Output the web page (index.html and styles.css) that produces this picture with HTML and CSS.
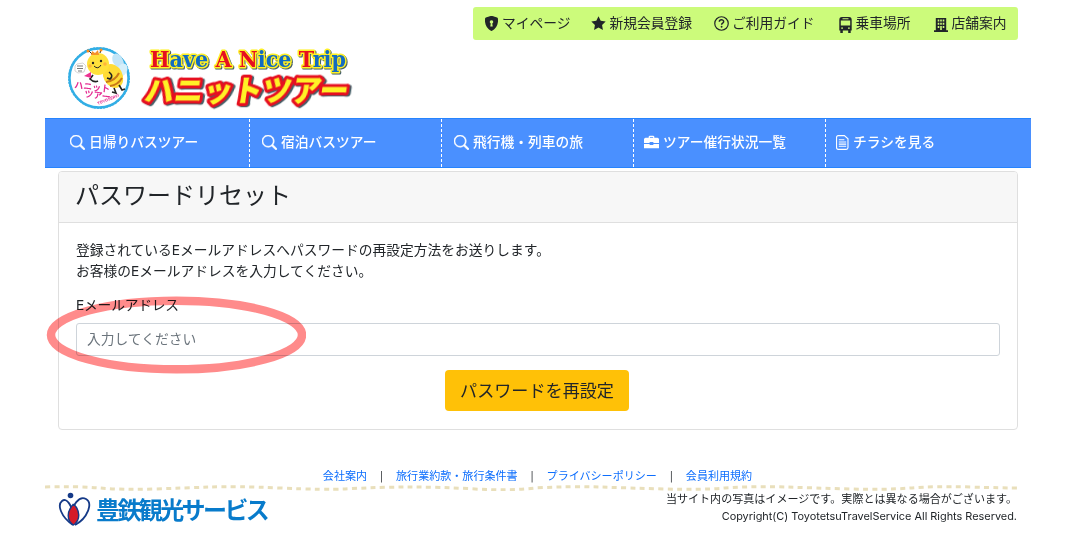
FILE: index.html
```html
<!DOCTYPE html>
<html lang="ja">
<head>
  <meta charset="UTF-8">
  <meta name="viewport" content="width=device-width, initial-scale=1.0">
  <title>パスワードリセット</title>
  <link rel="stylesheet" href="styles.css">
</head>
<body>
  <svg width="0" height="0" class="defs">
    <symbol id="search" viewBox="0 0 16 16">
      <path d="M11.742 10.344a6.5 6.5 0 1 0-1.397 1.398l3.85 3.85a1 1 0 0 0 1.415-1.414zM12 6.5a5.5 5.5 0 1 1-11 0 5.5 5.5 0 0 1 11 0" stroke="currentColor" stroke-width=".6"/>
    </symbol>
  </svg>
  <div class="container">
    <header class="header">
      <ul class="user-menu">
        <li><a href="#"><svg class="icon" viewBox="0 0 16 16"><path fill-rule="evenodd" d="M8 0c-.7 0-2.600.5-5.200 1.300C1.800 1.600 1.200 2.200 1.100 3 .6 7.200 2 11.500 4.800 13.900 6 15 7.300 16 8 16s2-1 3.200-2.100C14 11.500 15.400 7.200 14.900 3c-.1-.8-.7-1.400-1.700-1.700C10.600.5 8.700 0 8 0m0 4.500a1.900 1.900 0 0 1 .8 3.600l.5 3H6.700l.5-3A1.900 1.900 0 0 1 8 4.500"/></svg>マイページ</a></li>
        <li><a href="#"><svg class="icon" viewBox="0 0 16 16"><path d="M8 .3l2.350 4.800 5.300.77-3.850 3.730.93 5.300L8 12.350 3.270 14.900l.93-5.300L.35 5.870l5.300-.77z"/></svg>新規会員登録</a></li>
        <li class="guide"><a href="#"><svg class="icon" viewBox="0 0 16 16"><circle cx="8" cy="8" r="7.200" fill="none" stroke="currentColor" stroke-width="1.300"/><path d="M5.700 6.200C5.700 3.300 10.300 3.400 10.300 6c0 1.600-2.200 1.600-2.200 3.200" fill="none" stroke="currentColor" stroke-width="1.600"/><circle cx="8.100" cy="11.500" r="1"/></svg>ご利用ガイド</a></li>
        <li><a href="#"><svg class="icon bus" viewBox="0 0 13 16"><path fill-rule="evenodd" d="M3 0h7c2 0 2.700 1 2.700 3v10.500h-1V16H9.200v-2.500H3.800V16H1.300v-2.500h-1V3C.3 1 1 0 3 0M3.500 1.300v1h6v-1zM1.800 3.500V8.500h9.400V3.500zM2.200 10.500v1.300H4v-1.300zm6.800 0v1.300h1.800v-1.300z"/></svg>乗車場所</a></li>
        <li><a href="#"><svg class="icon building" viewBox="0 0 14 14"><path fill-rule="evenodd" d="M1.800 0h10.400v12.300H14V14H0v-1.700h1.800zM3.700 1.500v2h1.600v-2zm2.500 0v2h1.600v-2zm2.500 0v2h1.600v-2zM3.700 4.800v2h1.600v-2zm2.500 0v2h1.600v-2zm2.500 0v2h1.600v-2zM3.700 8v2h1.600V8zm2.500 0v4h1.600V8zm2.500 0v2h1.600V8z"/></svg>店舗案内</a></li>
      </ul>
      <a href="#" class="brand">
        <svg class="brand-mark" viewBox="0 0 64 64">
          <circle cx="32" cy="32" r="29.500" fill="#fff" stroke="#32aee5" stroke-width="2.400"/>
          <circle cx="32" cy="32" r="30.500" fill="none" stroke="#32aee5" stroke-width="1" stroke-dasharray="2 1.200"/>
          <ellipse cx="51" cy="15" rx="5" ry="8" fill="#c3e5f7" transform="rotate(-28 51 15)"/>
          <ellipse cx="55" cy="24" rx="5" ry="7" fill="#d5effa" transform="rotate(30 55 24)"/>
          <ellipse cx="46" cy="30" rx="9.500" ry="12.500" fill="#ffdc35" transform="rotate(-28 46 30)"/>
          <path d="M39 36q9-1 13-9M43 40q8-1 12-8" fill="none" stroke="#c97818" stroke-width="2"/>
          <circle cx="31" cy="18" r="11" fill="#ffe13b"/>
          <path d="M25 8L21 4M33 7l1-4" fill="none" stroke="#222" stroke-width="1"/>
          <circle cx="21" cy="5" r="1.500" fill="#ff8a18"/><circle cx="34" cy="4" r="1.500" fill="#ff8a18"/>
          <path d="M24 9l1-4 3 2 3-3 1 5z" fill="#f7922b"/>
          <circle cx="26" cy="17" r="1.200" fill="#222"/><circle cx="34" cy="15" r="1.200" fill="#222"/>
          <path d="M27 20q4 4 7-1" fill="none" stroke="#222" stroke-width="1"/>
          <circle cx="23" cy="20" r="1.800" fill="#ffb43b"/><circle cx="38" cy="18" r="1.800" fill="#ffb43b"/>
          <path d="M42 26q5 4 1 7l-3-1M26 29l-3 4q4 4 8 2M47 42l2 5-4-1M52 39l3 5 3-1" fill="none" stroke="#222" stroke-width="1.600"/>
          <path d="M17 30l7-4v6z" fill="#ed3292"/>
          <path d="M8 20l2-2 6-1 3 3-2 6-6 1-3-2z" fill="#fff" stroke="#aaa" stroke-width=".5"/>
          <path d="M10 20h6M10 22.500h6M11 25h4" stroke="#555" stroke-width=".8"/>
          <text x="7" y="42" class="mark-text" transform="rotate(7 7 42)">ハニット</text>
          <text x="17" y="51" class="mark-text" transform="rotate(7 17 51)">ツアー</text>
          <text x="31" y="59" class="mark-town" transform="rotate(-22 31 59)">TOYOSERVI</text>
        </svg>
        <svg class="brand-name" viewBox="0 0 216 66">
          <text x="10" y="21" textLength="196" lengthAdjust="spacingAndGlyphs" class="latin"><tspan class="red">H</tspan>ave <tspan class="red">A N</tspan>ice <tspan class="red">T</tspan>rip</text>
          <text x="12" y="55.500" textLength="204" lengthAdjust="spacingAndGlyphs" class="kana" transform="skewX(-9)">ハニットツアー</text>
        </svg>
      </a>
    </header>

    <nav class="nav">
      <a href="#"><svg class="icon"><use href="#search"/></svg>日帰りバスツアー</a>
      <a href="#"><svg class="icon"><use href="#search"/></svg>宿泊バスツアー</a>
      <a href="#"><svg class="icon"><use href="#search"/></svg>飛行機・列車の旅</a>
      <a href="#" class="status"><svg class="icon" viewBox="0 0 16 16"><path fill-rule="evenodd" d="M5 3V1.500L6 .8h4l1 .7V3h3.500l1.500 1v4.500h-6V7.500H6v1H0V4l1.500-1zM6.300 3h3.400V2H6.300zM0 9.500h6v1.200h4V9.500h6V14H0z"/></svg>ツアー催行状況一覧</a>
      <a href="#"><svg class="icon file" viewBox="0 0 14 16"><path d="M2.500.6h6.500L12.900 4v9.500c0 1.300-.6 1.900-1.900 1.900H2.500C1.200 15.400.6 14.800.6 13.500v-11C.6 1.200 1.200.6 2.500.6zM3 5h6M3 7.500h8M3 9.700h8M3 12h8" fill="none" stroke="currentColor" stroke-width="1.200"/></svg>チラシを見る</a>
    </nav>

    <main class="card">
      <h1 class="card-header">パスワードリセット</h1>
      <form class="card-body" action="#" method="POST">
        <p>登録されているEメールアドレスへパスワードの再設定方法をお送りします。<br>お客様のEメールアドレスを入力してください。</p>
        <div class="form-group">
          <label for="email">Eメールアドレス</label>
          <input type="email" id="email" name="email" placeholder="入力してください">
          <!-- highlight around the email field -->
          <svg class="highlight" viewBox="0 0 260 78"><ellipse cx="130.500" cy="39" rx="125.500" ry="34.300"/></svg>
        </div>
        <button type="submit">パスワードを再設定</button>
      </form>
    </main>

    <footer class="footer">
      <div class="footer-links">
        <a href="#">会社案内</a><span>|</span><a href="#">旅行業約款・旅行条件書</a><span>|</span><a href="#">プライバシーポリシー</a><span>|</span><a href="#">会員利用規約</a>
      </div>
      <svg class="divider" viewBox="0 0 986 6"><path d="M0 2Q30 1 55 3T108 4Q140 3 165 2T235 3T300 4Q335 2 365 2T430 4T490 3Q525 1 555 2T620 4T680 3Q710 1 740 2T805 4T865 3Q890 1 925 2T974 3"/></svg>
      <div class="footer-bottom">
        <a href="#" class="company">
          <svg class="company-mark" viewBox="0 0 38 38">
            <path d="M15 34C3 26-1 14 4 10C9 6 14 15 16 26M17 34C30 27 35 12 28 8C21 4 14 15 13 24" fill="none" stroke="#153a88" stroke-width="1.800"/>
            <path d="M15.500 13C9 20 8 29 15.500 34C23 29 22 19 15.500 13" fill="#d51b29" stroke="#153a88" stroke-width="1.400"/>
            <circle cx="12.500" cy="4.500" r="2.800" fill="#153a88"/>
          </svg>
          <span>豊鉄観光サービス</span>
        </a>
        <div class="notes">
          <p>当サイト内の写真はイメージです。実際とは異なる場合がございます。</p>
          <p class="copyright">Copyright(C) ToyotetsuTravelService All Rights Reserved.</p>
        </div>
      </div>
    </footer>
  </div>
</body>
</html>
```
FILE: styles.css
```css
* {
  box-sizing: border-box;
}

body {
  margin: 0;
  background: #fff;
  color: #212529;
  font-family: Inter, "Noto Sans CJK JP", sans-serif;
  font-size: 13.75px;
  line-height: 21px;
}

a {
  color: inherit;
  text-decoration: none;
}

p {
  margin: 0;
}

.defs {
  display: block;
}

.container {
  width: 986px;
  margin-left: 45px;
}

.icon {
  width: 15px;
  height: 15px;
  flex: none;
  fill: currentColor;
}

/* header */
.header {
  height: 118px;
  padding: 7px 13px 0;
  display: flex;
  flex-direction: column;
}

.user-menu {
  align-self: flex-end;
  display: flex;
  gap: 21px;
  width: 545px;
  height: 33px;
  margin: 0;
  padding: 0 0 0 11px;
  list-style: none;
  background: #ccfb7b;
  border-radius: 3px;
}

.user-menu a {
  display: flex;
  align-items: center;
  gap: 3px;
  height: 32px;
  white-space: nowrap;
}

.user-menu .guide {
  margin-left: 1px;
}

.user-menu .bus {
  width: 13px;
  height: 16px;
  margin: 3px 1px 0 3px;
}

.user-menu .building {
  width: 14px;
  height: 14px;
  margin: 4px 1px 0 2px;
}

.brand {
  display: flex;
  margin: 6px 0 0 9px;
}

.brand-mark {
  width: 64px;
  height: 64px;
}

.brand-name {
  width: 216px;
  height: 66px;
  margin-left: 9px;
  overflow: visible;
}

.mark-text {
  font-size: 9px;
  font-weight: 700;
  fill: #e42b91;
}

.mark-town {
  font-size: 4px;
  font-weight: 700;
  fill: #e42b91;
}

.latin {
  font-family: "DejaVu Serif", serif;
  font-size: 21.5px;
  font-weight: 700;
  fill: #126bc1;
  stroke: #fff126;
  stroke-width: 3px;
  stroke-linejoin: round;
  paint-order: stroke;
  filter: drop-shadow(1.5px 1.5px 0 #466069);
}

.latin .red {
  fill: #e60f20;
}

.kana {
  font-family: "Noto Sans CJK JP", sans-serif;
  font-size: 30px;
  font-weight: 900;
  fill: #fff126;
  stroke: #e60f20;
  stroke-width: 6px;
  stroke-linejoin: round;
  paint-order: stroke;
  filter: drop-shadow(2px 1.5px 0 #466069);
}

/* main navigation */
.nav {
  display: flex;
  height: 50px;
  padding-left: 13px;
  background: #4a90ff;
  border-top: 1px solid #2684ff;
  border-bottom: 1px solid #2684ff;
  color: #fff;
  font-weight: 500;
}

.nav a {
  display: flex;
  align-items: center;
  gap: 4px;
  width: 192px;
  padding: 0 0 2px 12px;
  border-right: 1px dashed #fff;
  white-space: nowrap;
}

.nav a.status {
  padding-left: 10px;
}

.nav a:last-child {
  border-right: 0;
  padding-left: 10px;
}

.nav .file {
  width: 13px;
}

/* password reset card */
.card {
  width: 960px;
  height: 259px;
  margin: 3px 0 0 13px;
  border: 1px solid #dfdfdf;
  border-radius: 4px;
}

.card-header {
  height: 51px;
  margin: 0;
  padding: 0 16px;
  border-bottom: 1px solid #dfdfdf;
  border-radius: 3px 3px 0 0;
  background: #f7f7f7;
  font-size: 24px;
  font-weight: 400;
  line-height: 48px;
}

.card-body {
  display: flex;
  flex-direction: column;
  padding: 17px 17px 0;
}

.form-group {
  position: relative;
  display: flex;
  flex-direction: column;
  margin: 13px 0 14px;
}

.form-group label {
  letter-spacing: -.2px;
}

.form-group input {
  height: 33px;
  margin-top: 7px;
  padding: 0 10px 2px;
  border: 1px solid #ced4da;
  border-radius: 3px;
  font: inherit;
}

.form-group input::placeholder {
  color: #6c757d;
}

.highlight {
  position: absolute;
  left: -30px;
  top: 1px;
  width: 260px;
  height: 78px;
  fill: none;
  stroke: #ff8b8b;
  stroke-width: 8.5px;
  mix-blend-mode: multiply;
  pointer-events: none;
}

.card-body button {
  align-self: center;
  width: 184px;
  height: 41px;
  margin-right: 2px;
  padding: 0 0 3px;
  border: 0;
  border-radius: 4px;
  background: #ffc107;
  color: #212529;
  font-family: inherit;
  font-size: 17.1px;
}

/* footer */
.footer {
  padding-top: 38px;
  font-size: 11.05px;
  line-height: 17px;
}

.footer-links {
  display: flex;
  justify-content: center;
  gap: 13px;
  height: 17px;
  margin-right: 1px;
  color: #0d6efd;
}

.footer-links span {
  width: 3px;
  color: #212529;
  font-size: 9.5px;
  text-align: center;
}

.divider {
  display: block;
  width: 986px;
  height: 6px;
  fill: none;
  stroke: #e9dfbb;
  stroke-width: 3px;
  stroke-dasharray: 5 4.3;
}

.footer-bottom {
  display: flex;
  justify-content: space-between;
  padding: 0 14px 0 13px;
}

.company {
  display: flex;
  color: #087bcb;
  font-size: 24px;
  font-weight: 700;
  letter-spacing: -2.6px;
  line-height: 40px;
  white-space: nowrap;
}

.company-mark {
  width: 38px;
  height: 38px;
}

.notes {
  text-align: right;
}

.copyright {
  font-size: 10.9px;
  line-height: 16px;
}
```
